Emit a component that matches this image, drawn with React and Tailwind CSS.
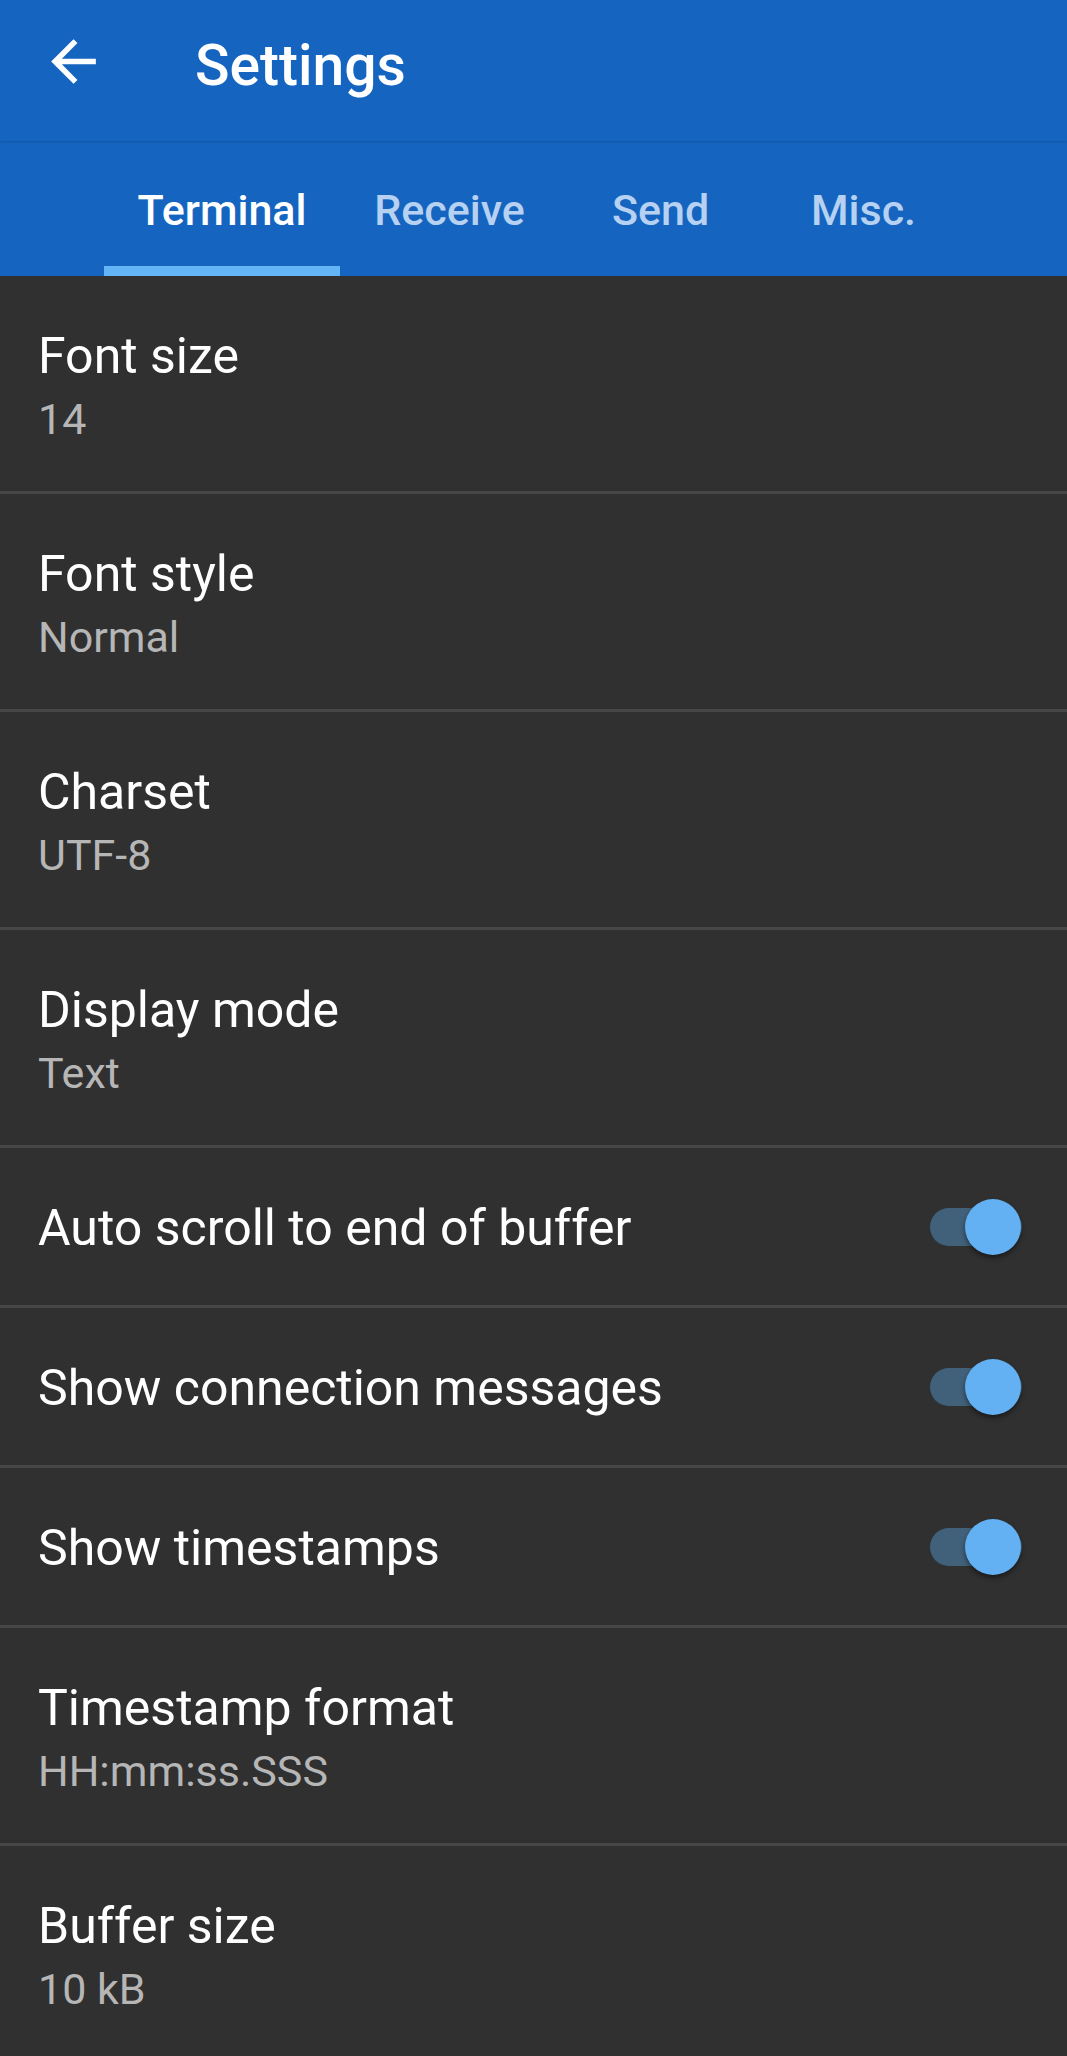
import React from "react";

const font = { fontFamily: "Roboto, 'Noto Sans', sans-serif" };

function TextRow({ title, summary }) {
  return (
    <div className="h-[218px] border-b-[3px] border-[#474747] pl-[38px] pt-[51px]">
      <div className="text-[50px] leading-[59px] text-white">{title}</div>
      <div className="mt-[4px] text-[43px] leading-[58px] text-[#b6b6b6]">{summary}</div>
    </div>
  );
}

function SwitchRow({ title }) {
  return (
    <div className="flex h-[160px] items-center justify-between border-b-[3px] border-[#474747] pl-[38px] pr-[42px]">
      <div className="pt-[3px] text-[50px] leading-[59px] text-white">{title}</div>
      <div className="relative h-[56px] w-[95px]">
        <div className="absolute left-0 top-[9px] h-[38px] w-[92px] rounded-full bg-[#41607a]" />
        <div className="absolute right-[4px] top-0 h-[56px] w-[56px] rounded-full bg-[#63b1f2] shadow-[0_3px_5px_rgba(0,0,0,0.45)]" />
      </div>
    </div>
  );
}

export default function App() {
  const tabs = [
    { label: "Terminal", w: "w-[236px]", active: true },
    { label: "Receive", w: "w-[219px]" },
    { label: "Send", w: "w-[203px]" },
    { label: "Misc.", w: "w-[203px]" },
  ];
  return (
    <div className="min-h-[2056px] w-[1067px] overflow-hidden bg-[#303030]" style={font}>
      <div className="relative z-10 flex h-[141px] items-start bg-[#1565c0] shadow-[0_1px_2px_rgba(0,0,0,0.18)]">
        <div className="ml-[40px] mt-[28px] h-[67px] w-[67px]">
          <svg viewBox="0 0 24 24" width="67" height="67" fill="#ffffff">
            <path d="M20 11H7.83l5.59-5.59L12 4l-8 8 8 8 1.41-1.41L7.83 13H20v-2z" />
          </svg>
        </div>
        <div className="ml-[88px] mt-[32px] text-[57px] font-medium leading-[68px] text-white">
          Settings
        </div>
      </div>
      <div className="flex h-[135px] bg-[#1565c0] pl-[104px]">
        {tabs.map((t) => (
          <div key={t.label} className={`${t.w} relative flex flex-col items-center pt-[44px]`}>
            <div
              className={`text-[43px] font-medium leading-[50px] ${
                t.active ? "text-white" : "text-[#b6d1f1]"
              }`}
            >
              {t.label}
            </div>
            {t.active && <div className="absolute bottom-0 left-0 h-[10px] w-full bg-[#64b5f6]" />}
          </div>
        ))}
      </div>
      <div>
        <TextRow title="Font size" summary="14" />
        <TextRow title="Font style" summary="Normal" />
        <TextRow title="Charset" summary="UTF-8" />
        <TextRow title="Display mode" summary="Text" />
        <SwitchRow title="Auto scroll to end of buffer" />
        <SwitchRow title="Show connection messages" />
        <SwitchRow title="Show timestamps" />
        <TextRow title="Timestamp format" summary="HH:mm:ss.SSS" />
        <TextRow title="Buffer size" summary="10 kB" />
      </div>
    </div>
  );
}
